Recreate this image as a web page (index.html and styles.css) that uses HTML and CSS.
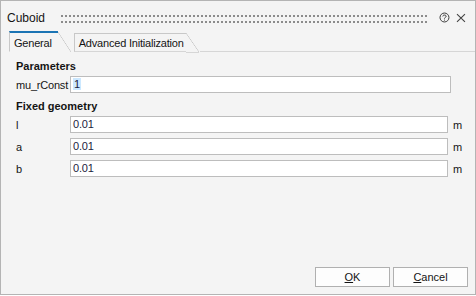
FILE: index.html
```html
<!DOCTYPE html>
<html lang="en">
<head>
    <meta charset="UTF-8">
    <title>Cuboid</title>
    <link rel="stylesheet" href="styles.css">
</head>
<body>
    <div class="dialog">
        <div class="titlebar">
            <span class="title">Cuboid</span>
            <div class="grip"></div>
            <svg class="help" width="11" height="11" viewBox="0 0 11 11">
                <circle cx="5.5" cy="5.5" r="4.5" fill="none" stroke="#3a3a3a" stroke-width="1"/>
                <path d="M3.8 4.4 C3.8 2.6 7.2 2.6 7.2 4.3 C7.2 5.4 5.5 5.4 5.5 6.6" fill="none" stroke="#3a3a3a" stroke-width="1"/>
                <rect x="5" y="7.6" width="1" height="1" fill="#3a3a3a"/>
            </svg>
            <svg class="close" width="10" height="10" viewBox="0 0 10 10">
                <path d="M1 1 L9 9 M9 1 L1 9" stroke="#444" stroke-width="1.1"/>
            </svg>
        </div>

        <div class="tabs">
            <div class="tab active">General</div>
            <div class="tab">Advanced Initialization</div>
            <div class="tab-fill"></div>
        </div>

        <div class="panel">
            <h3>Parameters</h3>
            <div class="row">
                <label>mu_rConst</label>
                <div class="field wide"><span class="sel">1</span></div>
            </div>

            <h3>Fixed geometry</h3>
            <div class="row">
                <label>l</label>
                <div class="field">0.01</div>
                <span class="unit">m</span>
            </div>
            <div class="row">
                <label>a</label>
                <div class="field">0.01</div>
                <span class="unit">m</span>
            </div>
            <div class="row">
                <label>b</label>
                <div class="field">0.01</div>
                <span class="unit">m</span>
            </div>
        </div>

        <div class="footer">
            <button class="btn"><u>O</u>K</button>
            <button class="btn"><u>C</u>ancel</button>
        </div>
    </div>
</body>
</html>
```

FILE: styles.css
```css
* {
    margin: 0;
    padding: 0;
    box-sizing: border-box;
}
body {
    background: #fff;
    font-family: "Liberation Sans", Arial, sans-serif;
    font-size: 11px;
    letter-spacing: -0.2px;
    color: #141414;
}
.dialog {
    width: 476px;
    height: 295px;
    background: #f4f4f4;
    border: 1px solid #b4b4b4;
    display: flex;
    flex-direction: column;
}
.titlebar {
    height: 30px;
    display: flex;
    align-items: center;
    padding: 3px 9px 0 6px;
}
.title {
    font-size: 12px;
    letter-spacing: 0;
    line-height: 16px;
}
.grip {
    width: 368px;
    height: 8px;
    margin-left: 16px;
    margin-right: 12px;
    background-image:
        linear-gradient(to right, #8c8c8c 2px, transparent 2px),
        linear-gradient(to right, #8c8c8c 2px, transparent 2px);
    background-size: 4px 2px;
    background-position: 0 0, 0 6px;
    background-repeat: repeat-x;
    margin-top: 2px;
}
.help {
    margin-right: 6px;
}
.tabs {
    display: flex;
    align-items: flex-end;
    height: 21px;
    padding-left: 8px;
}
.tab {
    position: relative;
    height: 19px;
    padding: 1px 2px 0 4px;
    margin-right: 13px;
    border-left: 1px solid #c8c8c8;
    border-top: 1px solid #c8c8c8;
    border-bottom: 1px solid #d6d6d6;
    line-height: 16px;
}
.tab::after {
    content: "";
    position: absolute;
    top: -1px;
    right: -13px;
    width: 13px;
    height: 19px;
    background: linear-gradient(to top right, transparent calc(50% - 0.6px), #c8c8c8 50%, transparent calc(50% + 0.6px));
    border-bottom: 1px solid #d6d6d6;
}
.tab.active {
    height: 21px;
    padding: 2px 6px 0 4px;
    margin-right: 16px;
    border-top: 2px solid #1b74b4;
    border-bottom-color: transparent;
}
.tab.active::after {
    top: -1px;
    height: 20px;
    border-bottom: none;
}
.tab-fill {
    flex: 1;
    border-bottom: 1px solid #d6d6d6;
    margin-left: 1px;
}
.panel {
    padding: 6px 0 0 15px;
}
h3 {
    font-size: 11px;
    font-weight: bold;
    letter-spacing: 0;
    line-height: 16px;
    margin-bottom: 2px;
}
.row {
    display: flex;
    align-items: center;
    height: 17px;
    margin-bottom: 5px;
}
.row label {
    width: 54px;
    white-space: nowrap;
    line-height: 16px;
}
.field {
    width: 378px;
    height: 17px;
    background: #fff;
    border: 1px solid #bdbdbd;
    padding-left: 2px;
    line-height: 15px;
    color: #1c1c40;
}
.field.wide {
    width: 381px;
}
.sel {
    background: #cce8ff;
    padding: 0 1px;
}
.unit {
    margin-left: 5px;
    line-height: 16px;
}
.footer {
    margin-top: auto;
    display: flex;
    justify-content: flex-end;
    gap: 3px;
    padding: 0 7px 7px 0;
}
.btn {
    width: 75px;
    height: 20px;
    font-family: "Liberation Sans", Arial, sans-serif;
    font-size: 11px;
    color: #141414;
    background: #fdfdfd;
    border: 1px solid #b0b0b0;
    line-height: 16px;
}
```
